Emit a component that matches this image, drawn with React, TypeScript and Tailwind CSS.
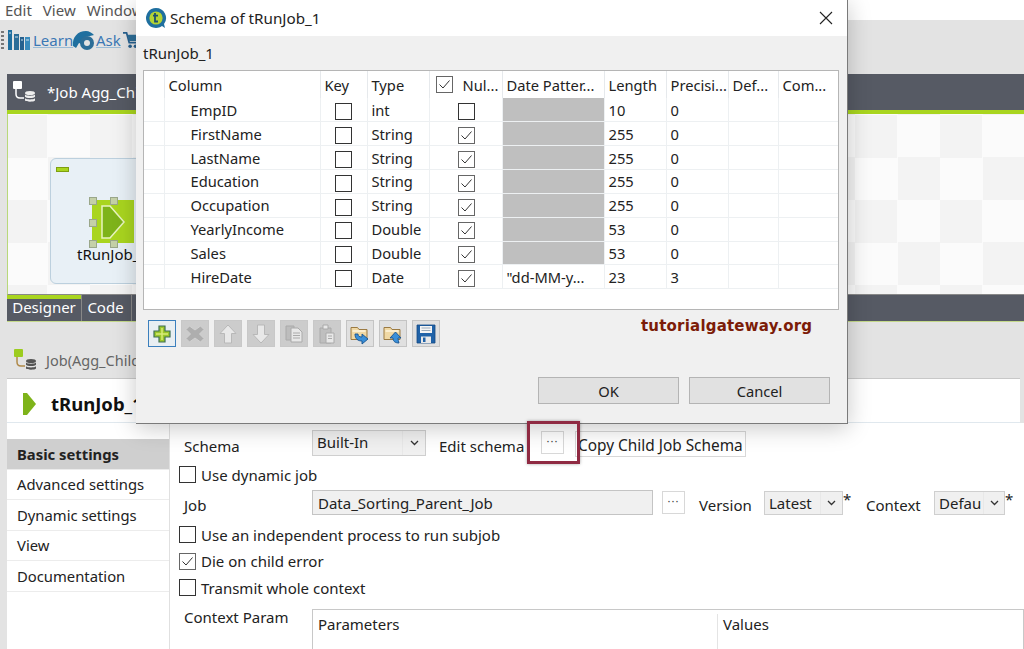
import React from "react";

const rows = [
  ["EmpID", "int", false, "", "10", "0"],
  ["FirstName", "String", true, "", "255", "0"],
  ["LastName", "String", true, "", "255", "0"],
  ["Education", "String", true, "", "255", "0"],
  ["Occupation", "String", true, "", "255", "0"],
  ["YearlyIncome", "Double", true, "", "53", "0"],
  ["Sales", "Double", true, "", "53", "0"],
  ["HireDate", "Date", true, "\"dd-MM-y...", "23", "3"],
] as const;

function Check({ on = false, className = "" }: { on?: boolean; className?: string }) {
  return (
    <span className={`inline-flex h-[17px] w-[17px] shrink-0 items-center justify-center border bg-white ${on ? "border-[#666]" : "border-[#333]"} ${className}`}>
      {on && (
        <svg width="13" height="13" viewBox="0 0 13 13" fill="none" stroke="#333" strokeWidth="1">
          <path d="M1.500 6.500 5 10 11.500 2.500" />
        </svg>
      )}
    </span>
  );
}

function Chevron() {
  return (
    <svg width="9" height="6" viewBox="0 0 9 6" fill="none" stroke="#333" strokeWidth="1.3">
      <path d="M1 1 4.500 4.500 8 1" />
    </svg>
  );
}

function Talend({ size = 22 }: { size?: number }) {
  return (
    <svg width={size} height={size} viewBox="0 0 22 22">
      <path d="M11 1a10 10 0 1 0 6 18l3 2-1-4a10 10 0 0 0-8-16z" fill="#1f6f9f" />
      <circle cx="11" cy="11" r="6.600" fill="#b3d334" />
      <path d="M10 6v8.500h3M8 8.600h5" stroke="#1c4f6e" strokeWidth="1.800" fill="none" />
    </svg>
  );
}

function JobIcon({ green = false }: { green?: boolean }) {
  return (
    <svg width="24" height="24" viewBox="0 0 24 24">
      <rect x="1" y="1" width="9" height="8" rx="1" fill={green ? "#9ccc1f" : "#fff"} />
      <path d="M4 9v5q0 4 4 4h4" fill="none" stroke={green ? "#b08a4a" : "#fff"} strokeWidth="1.500" />
      <ellipse cx="18" cy="13" rx="5" ry="2" fill={green ? "#555" : "#eee"} />
      <path d="M13 14.500c1 1.600 9 1.600 10 0v2.300c-1 1.600-9 1.600-10 0zM13 18.200c1 1.600 9 1.600 10 0v2.300c-1 1.600-9 1.600-10 0z" fill={green ? "#555" : "#eee"} />
    </svg>
  );
}

function ToolIcon({ kind, focused = false, off = false }: { kind: string; focused?: boolean; off?: boolean }) {
  const g = "#e8e8e8";
  return (
    <span className={`flex h-[27px] w-[28px] items-center justify-center border ${focused ? "border-[#3b7fbd] bg-[#e8eef2]" : off ? "border-[#c8c8c8] bg-[#cccccc]" : "border-[#c4c4c4] bg-[#e0e0e0]"}`}>
      <svg width="22" height="22" viewBox="0 0 22 22">
        {kind === "add" && (
          <>
            <path d="M8 3h6v5h5v6h-5v5H8v-5H3V8h5z" fill="#9cc72a" stroke="#3f6f55" strokeWidth="1.200" />
            <path d="M11 5v12M5 11h12" stroke="#d8ec7a" strokeWidth="1.500" />
          </>
        )}
        {kind === "del" && <path d="M5.500 3 11 7l5.500-4L20 6.500 15.500 11l4.500 4.500-3.500 3.500L11 15l-5.500 4L2 15.500 6.500 11 2 6.500z" fill="#aeaeae" stroke="#d2d2d2" strokeWidth="1" />}
        {kind === "up" && <path d="M11 2l8 8.500h-4.500V20h-7v-9.500H3z" fill={g} stroke="#b8b8b8" strokeWidth="1" />}
        {kind === "down" && <path d="M11 20l8-8.500h-4.500V2h-7v9.500H3z" fill={g} stroke="#b8b8b8" strokeWidth="1" />}
        {kind === "copy" && (
          <>
            <path d="M3 3h8v14H3z" fill="#bdbdbd" stroke="#aaa" />
            <path d="M8 5h7l4 4v10H8z" fill={g} stroke="#aaa" />
            <path d="M10 10h7M10 12.500h7M10 15h7" stroke="#aaa" />
          </>
        )}
        {kind === "paste" && (
          <>
            <path d="M4 5h11v15H4z" fill="#bfbfbf" stroke="#aaa" />
            <path d="M7 2h5v4H7z" fill={g} stroke="#aaa" />
            <path d="M10 10h8v10h-8z" fill={g} stroke="#aaa" />
            <path d="M12 13h4M12 15.500h4" stroke="#aaa" />
          </>
        )}
        {(kind === "imp" || kind === "exp") && (
          <>
            <path d="M2 4.500h6.500l1.500 2h8v10H2z" fill="#f0d8a4" stroke="#9b7a42" />
            <path d="M3.500 8h13" stroke="#fff6de" strokeWidth="1.500" />
          </>
        )}
        {kind === "imp" && <path d="M9 11c0 2 1 3 4 3v-3l6 5-6 5v-3c-4 0-7-2-7-7z" fill="#3a8fd8" stroke="#17538f" strokeWidth=".9" />}
        {kind === "exp" && <path d="M17 20c-3 0-6-1-6-5h-3l5.500-6 5.500 6h-3c0 2 .5 3 1 5z" fill="#3a8fd8" stroke="#17538f" strokeWidth=".9" />}
        {kind === "save" && (
          <>
            <path d="M2 2h18v18H2z" fill="#1f62a8" stroke="#144a84" strokeWidth=".8" />
            <path d="M5 3h12v7H5z" fill="#f4f4f4" />
            <path d="M6.500 5h9M6.500 7.500h9" stroke="#9ab" />
            <path d="M6 13.500h10V20H6z" fill="#e8e8e8" />
            <path d="M8 14.500h2.500v4.500H8z" fill="#1f62a8" />
          </>
        )}
      </svg>
    </span>
  );
}

function Button({ label }: { label: string }) {
  return (
    <span className="flex h-[27px] w-[141px] items-center justify-center border border-[#b4b4b4] bg-[#e1e1e1] text-[#222]">{label}</span>
  );
}

function Ellipsis({ className = "" }: { className?: string }) {
  return (
    <span className={`flex h-[23px] w-[23px] shrink-0 items-start justify-center border border-[#d8d8d8] bg-white text-[11px] leading-[18px] tracking-[1px] text-[#444] ${className}`}>···</span>
  );
}

const Th = ({ children, className = "" }: { children?: React.ReactNode; className?: string }) => (
  <th className={`border-r border-[#e6e9ec] px-[4px] text-left font-normal ${className}`}>{children}</th>
);
const Td = ({ children, className = "" }: { children?: React.ReactNode; className?: string }) => (
  <td className={`border-r border-b border-[#edf0f2] px-[4px] ${className}`}>{children}</td>
);

function Dialog() {
  return (
    <div className="absolute top-0 left-[136px] flex h-[424px] w-[712px] flex-col border-r border-b border-[#7a7a7a] bg-[#f0f0f0] text-[14.700px] shadow-[0_4px_22px_rgba(0,0,0,0.22)]">
      <div className="flex h-[36px] shrink-0 items-center bg-white pl-[9px] text-[15.200px]">
        <Talend />
        <span className="ml-[3px] text-[#222]">Schema of tRunJob_1</span>
        <svg className="mr-[14px] ml-auto" width="14" height="14" viewBox="0 0 14 14" stroke="#222" strokeWidth="1.100">
          <path d="M1 1l12 12M13 1 1 13" />
        </svg>
      </div>
      <div className="pt-[7px] pl-[7px] text-[15px] leading-[20px] text-[#222]">tRunJob_1</div>
      <div className="mt-[7px] ml-[7px] h-[240px] w-[696px] border border-[#b5b5b5] bg-white text-[#222]">
        <table className="w-full table-fixed border-collapse">
          <colgroup>
            <col className="w-[20px]" />
            <col className="w-[156px]" />
            <col className="w-[47px]" />
            <col className="w-[62px]" />
            <col className="w-[73px]" />
            <col className="w-[102px]" />
            <col className="w-[62px]" />
            <col className="w-[62px]" />
            <col className="w-[50px]" />
            <col />
          </colgroup>
          <thead>
            <tr className="h-[27px]">
              <Th />
              <Th>Column</Th>
              <Th>Key</Th>
              <Th>Type</Th>
              <Th>
                <span className="flex items-center gap-[10px] pl-[2px]">
                  <Check on />
                  Nul...
                </span>
              </Th>
              <Th>Date Patter...</Th>
              <Th>Length</Th>
              <Th>Precisi...</Th>
              <Th>Def...</Th>
              <Th className="border-r-0">Com...</Th>
            </tr>
          </thead>
          <tbody>
            {rows.map((r) => (
              <tr key={r[0]} className="h-[23.850px]">
                <Td />
                <Td className="pl-[26px]">{r[0]}</Td>
                <Td className="pl-[14px]"><Check className="align-middle" /></Td>
                <Td>{r[1]}</Td>
                <Td className="pl-[28px]"><Check on={r[2]} className="align-middle" /></Td>
                <Td className={r[3] ? "" : "bg-[#bfbfbf]"}>{r[3]}</Td>
                <Td>{r[4]}</Td>
                <Td>{r[5]}</Td>
                <Td />
                <Td className="border-r-0" />
              </tr>
            ))}
          </tbody>
        </table>
      </div>
      <div className="mt-[10px] ml-[12px] flex h-[27px] gap-[5px]">
        <ToolIcon kind="add" focused />
        <ToolIcon kind="del" off />
        <ToolIcon kind="up" off />
        <ToolIcon kind="down" off />
        <ToolIcon kind="copy" off />
        <ToolIcon kind="paste" off />
        <ToolIcon kind="imp" />
        <ToolIcon kind="exp" />
        <ToolIcon kind="save" />
        <span className="-mt-[4px] ml-[196px] self-start text-[15px] font-bold tracking-[0.2px] whitespace-nowrap text-[#7c1c08] [font-family:'DejaVu_Sans',sans-serif]">tutorialgateway.org</span>
      </div>
      <div className="mt-[30px] ml-[402px] flex gap-[10px]">
        <Button label="OK" />
        <Button label="Cancel" />
      </div>
    </div>
  );
}

const sideItems = ["Basic settings", "Advanced settings", "Dynamic settings", "View", "Documentation"];

function Select({ label, w, textW, lift = "" }: { label: string; w: string; textW: string; lift?: string }) {
  return (
    <span className={`flex shrink-0 items-stretch border border-[#cfcfcf] bg-[#f0f0f0] text-[#222] ${w}`}>
      <span className={`flex items-center pl-[4px] whitespace-nowrap ${textW} ${lift}`}>{label}</span>
      <span className="flex flex-1 items-center justify-center border-l border-[#e8e8e8]"><Chevron /></span>
    </span>
  );
}

function Option({ on = false, children }: { on?: boolean; children: React.ReactNode }) {
  return (
    <div className="flex h-[19px] items-center gap-[5px] pl-[9px]">
      <Check on={on} />
      {children}
    </div>
  );
}

function Asterisk() {
  return <span className="mt-[1px] w-[10px] text-[15px] leading-[16px]">*</span>;
}

export default function App() {
  return (
    <div className="relative h-[649px] w-[1024px] overflow-hidden bg-[#e3e3e3] text-[15px] leading-[20px] text-[#222] [font-family:'Noto_Sans',sans-serif]">
      <div className="flex h-[20px] gap-[11px] bg-white pl-[5px] text-[#555]">
        <span>Edit</span><span>View</span><span>Window</span>
      </div>
      <div className="flex h-[40px] items-center pl-[1px] text-[#3b78b5]">
        <svg width="3" height="18" viewBox="0 0 3 18" fill="#777">
          <path d="M0 0h3v2H0zM0 4h3v2H0zM0 8h3v2H0zM0 12h3v2H0zM0 16h3v2H0z" />
        </svg>
        <svg width="24" height="22" viewBox="0 0 24 22" className="ml-[4px]">
          <path d="M0 1h4v20H0z" fill="#1f6f9f" />
          <path d="M6 5h5v16H6z" fill="#2c6d97" />
          <path d="M12 8h4v13h-4z" fill="#27618f" />
          <path d="M17 8h5v13h-5z" fill="#3a8bbd" />
          <path d="M1 4h2M7 8h3M13 11h2M18 11h3" stroke="#cfe2ee" />
        </svg>
        <span className="ml-[1px] w-[39px] underline decoration-[#9bbcd6]">Learn</span>
        <svg width="24" height="24" viewBox="0 0 24 24">
          <path d="M1 18C0 9 6 3 14 3c3 0 6 2 8 4l-4 1c-5 0-8 3-8 8l-3-1-3 5z" fill="#1f6f9f" />
          <circle cx="15" cy="15" r="7" fill="#2c6d97" />
          <circle cx="15" cy="15" r="3" fill="#e3e3e3" />
        </svg>
        <span className="w-[27px] underline decoration-[#9bbcd6]">Ask</span>
        <svg width="16" height="22" viewBox="0 0 18 22">
          <path d="M0 3h4l3 11h9" stroke="#27618f" strokeWidth="2" fill="none" />
          <path d="M5 5h12l-2 7H7z" fill="#2c6d97" />
          <circle cx="8" cy="18" r="2" fill="#27618f" /><circle cx="14" cy="18" r="2" fill="#27618f" />
        </svg>
      </div>

      <div className="mt-[14px] ml-[7px] flex h-[248px] flex-col">
        <div className="flex h-[36px] shrink-0 items-center bg-[#565a64] pl-[5px] text-white">
          <JobIcon />
          <span className="ml-[11px]">*Job Agg_Child</span>
        </div>
        <div className="h-[4px] shrink-0 bg-[#a9d51f]" />
        <div className="relative h-[181px] shrink-0 border-b border-l border-b-[#888] border-l-[#b8d87a] bg-[repeating-conic-gradient(#fbfbfb_0_25%,#f3f3f3_0_50%)] bg-[size:85px_85px] bg-[position:5px_30px] bg-fixed">
          <div className="absolute top-[44px] left-[42px] h-[126px] w-[120px] rounded-[6px] border border-[#bcd0de] bg-[#e8f0f6]">
            <div className="mt-[8px] ml-[5px] h-[5px] w-[13px] border border-[#7e9f10] bg-[#a9d51f]" />
            <div className="absolute top-[41px] left-[41px] flex h-[43px] w-[42px] items-center justify-center bg-[#a9d51f]">
              <svg width="26" height="34" viewBox="0 0 26 34">
                <path d="M2 1h8l14 16-14 16H2z" fill="#7eb31a" stroke="#e8f4c0" strokeWidth="1.500" />
              </svg>
            </div>
            <span className="absolute top-[38px] left-[38px] h-[8px] w-[8px] border border-[#9aa78a] bg-[#c4d0a8]" />
            <span className="absolute top-[38px] left-[59px] h-[8px] w-[8px] border border-[#9aa78a] bg-[#c4d0a8]" />
            <span className="absolute top-[60px] left-[38px] h-[8px] w-[8px] border border-[#9aa78a] bg-[#c4d0a8]" />
            <span className="absolute top-[81px] left-[38px] h-[8px] w-[8px] border border-[#9aa78a] bg-[#c4d0a8]" />
            <span className="absolute top-[81px] left-[59px] h-[8px] w-[8px] border border-[#9aa78a] bg-[#c4d0a8]" />
            <span className="absolute top-[85px] left-[26px] whitespace-nowrap text-[#111]">tRunJob_1</span>
          </div>
        </div>
        <div className="flex h-[26px] shrink-0 bg-[#565a64] text-white">
          <span className="flex w-[74px] items-center justify-center rounded-br-[4px] border-t-[4px] border-[#a9d51f] pb-[6px]">Designer</span>
          <span className="flex w-[48px] items-center justify-center border-l border-[#888] pb-[2px]">Code</span>
          <span className="ml-[2px] w-[1px] bg-[#888]" />
        </div>
        <div className="h-px shrink-0 bg-[#c4d98a]" />
      </div>

      <div className="mt-[23px] ml-[13px] flex h-[33px] items-center pb-[3px] text-[#666]">
        <JobIcon green />
        <span className="ml-[9px] text-[14.500px]">Job(Agg_Child)</span>
      </div>

      <div className="mr-[4px] ml-[7px] flex h-[45px] items-center border-t border-b border-t-[#c8c8c8] border-b-[#e0e8ee] bg-white pt-[6px] pl-[15px]">
        <svg width="15" height="24" viewBox="0 0 15 24"><path d="M1 1h4l9 11-9 11H1z" fill="#7eb31a" /></svg>
        <span className="ml-[14px] text-[18.500px] font-bold text-[#111]">tRunJob_1</span>
      </div>

      <div className="ml-[7px] flex h-[226px] bg-white">
        <div className="flex w-[163px] shrink-0 flex-col border-r border-[#e0e0e0] pt-[16px]">
          {sideItems.map((s, i) => (
            <div key={s} className={`flex h-[30.500px] items-center border-b border-[#ececec] pl-[10px] text-[14.800px] ${i === 0 ? "bg-[#cfcfcf] font-bold" : ""}`}>{s}</div>
          ))}
        </div>
        <div className="flex-1 pt-[7px]">
          <div className="flex h-[27px] items-start">
            <span className="mt-[6px] ml-[14px] w-[128px]">Schema</span>
            <Select label="Built-In" w="w-[114px] h-[26px]" textW="w-[89px]" lift="pb-[2px]" />
            <span className="mt-[6px] ml-[13px] w-[102px]">Edit schema</span>
            <Ellipsis className="mt-[1px]" />
            <span className="mt-[1px] ml-[11px] flex h-[26px] w-[171px] items-center border border-[#d8d8d8] pt-[3px] pl-[2px] text-[15.400px] whitespace-nowrap">Copy Child Job Schema</span>
          </div>
          <div className="mt-[8px]"><Option>Use dynamic job</Option></div>
          <div className="mt-[6px] flex h-[26px] items-start">
            <span className="mt-[5px] ml-[14px] w-[128px]">Job</span>
            <span className="flex h-[25px] w-[341px] items-center border border-[#c4c4c4] bg-[#f0f0f0] pl-[5px]">Data_Sorting_Parent_Job</span>
            <Ellipsis className="mt-[1px] ml-[9px]" />
            <span className="mt-[5px] ml-[14px] w-[65px]">Version</span>
            <span className="mt-[1px]"><Select label="Latest" w="w-[79px] h-[24px]" textW="w-[55px]" /></span>
            <Asterisk />
            <span className="mt-[5px] ml-[13px] w-[68px]">Context</span>
            <span className="mt-[1px]"><Select label="Defau" w="w-[71px] h-[24px]" textW="w-[48px]" /></span>
            <Asterisk />
          </div>
          <div className="mt-[9px] flex flex-col gap-[7.500px]">
            <Option>Use an independent process to run subjob</Option>
            <Option on>Die on child error</Option>
            <Option>Transmit whole context</Option>
          </div>
          <div className="mt-[12px] flex">
            <span className="-mt-[2px] ml-[14px] w-[128px]">Context Param</span>
            <div className="flex h-[60px] flex-1 border border-[#c8c8c8] pt-[4px]">
              <span className="w-[405px] border-r border-[#e4e4e4] pl-[5px]">Parameters</span>
              <span className="pl-[5px]">Values</span>
            </div>
          </div>
        </div>
      </div>

      <Dialog />

      <div className="absolute top-[421px] left-[527px] h-[43px] w-[53px] border-[3px] border-[#8f2a42] shadow-[0_0_3px_rgba(0,0,0,0.35)]" />
    </div>
  );
}
